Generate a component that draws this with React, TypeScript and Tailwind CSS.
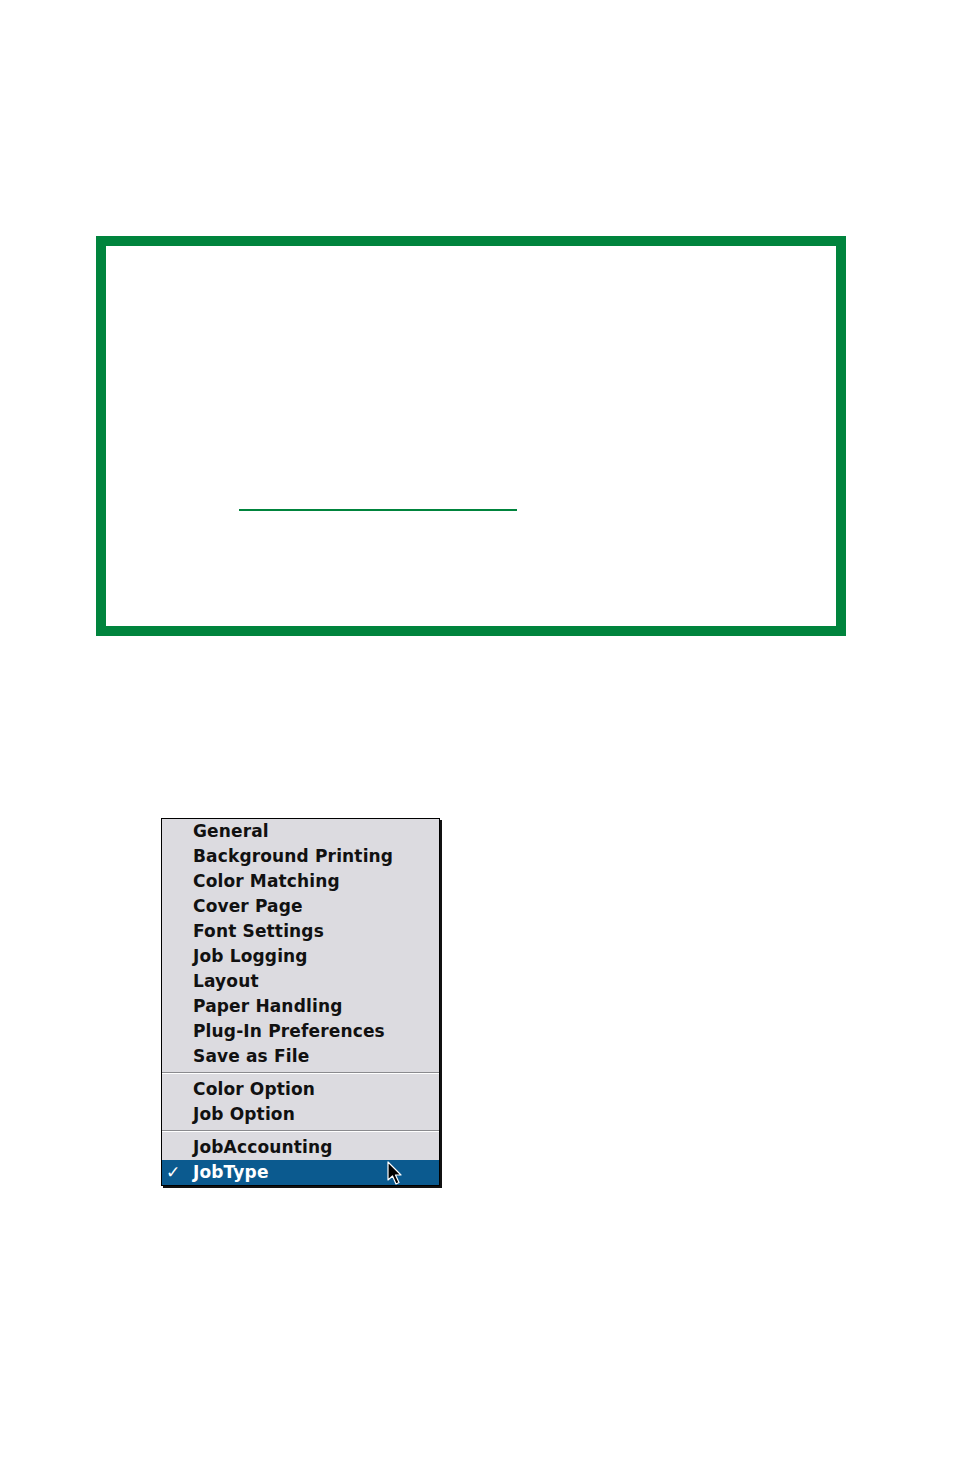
import React from 'react';

const groups = [
  ['General', 'Background Printing', 'Color Matching', 'Cover Page', 'Font Settings', 'Job Logging', 'Layout', 'Paper Handling', 'Plug-In Preferences', 'Save as File'],
  ['Color Option', 'Job Option'],
  ['JobAccounting', 'JobType'],
];

function Cursor() {
  return (
    <svg width="18" height="27" viewBox="0 0 18 27" className="absolute left-[225px] top-[1px]">
      <path d="M1 1 L1 19 L5.5 15 L9 23 L12 21.5 L8.5 14 L14 14 Z" fill="#000" stroke="#fff" strokeWidth="1.2" strokeLinejoin="round" />
    </svg>
  );
}

export default function App() {
  return (
    <div className="min-h-[1474px] bg-white pt-[236px] pl-[96px]" style={{ fontFamily: '"DejaVu Sans", Verdana, sans-serif' }}>
      <div className="w-[750px] h-[400px] border-[10px] border-[#00843d] pt-[263px] pl-[133px]">
        <div className="w-[278px] h-[2px] bg-[#00843d]" />
      </div>

      <div className="mt-[182px] ml-[65px] w-[279px] border border-black bg-[#dcdbe0] shadow-[2px_2px_0_#111]">
        {groups.map((g, gi) => (
          <div key={gi}>
            {gi > 0 && (
              <div className="h-[8px] flex flex-col justify-center">
                <div className="h-px bg-[#8a8a8e]" />
                <div className="h-px bg-white" />
              </div>
            )}
            {g.map((item) => {
              const sel = item === 'JobType';
              return (
                <div
                  key={item}
                  className={`relative h-[25px] flex items-center pl-[31px] text-[17px] font-bold tracking-[0.15px] leading-none ${sel ? 'bg-[#0b5a8f] text-white' : 'text-[#111]'}`}
                >
                  {sel && <span className="absolute left-[4px] top-[4px] text-[17px] font-bold">✓</span>}
                  {item}
                  {sel && <Cursor />}
                </div>
              );
            })}
          </div>
        ))}
      </div>
    </div>
  );
}
